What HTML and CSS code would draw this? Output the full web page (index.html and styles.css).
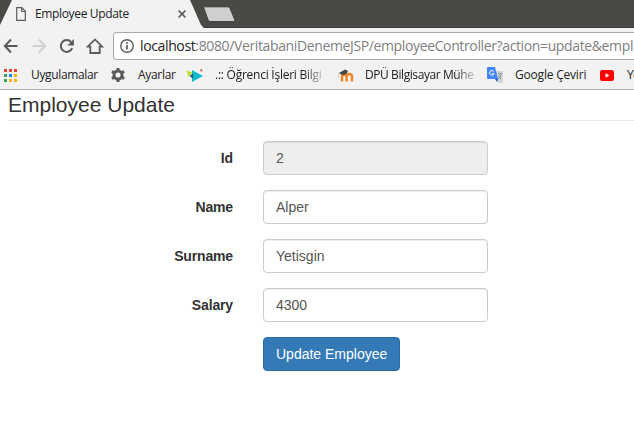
FILE: index.html
```html
<!DOCTYPE html>
<html lang="tr">
<head>
<meta charset="utf-8">
<title>Employee Update</title>
<link rel="stylesheet" href="styles.css">
</head>
<body>
<header class="browser">
  <div class="tabstrip">
    <div class="tab">
      <svg class="tab-page" width="10" height="14" viewBox="0 0 10 14"><path d="M.7.7h5.1l3.5 3.6v9H.7zM5.700.8v3.700h3.500" fill="none" stroke="#5a5a5a" stroke-width="1.2"/></svg>
      <span class="tab-title">Employee Update</span>
      <svg class="tab-close" width="8" height="8" viewBox="0 0 8 8"><path d="M.6.6l6.800 6.800M7.400.6L.6 7.400" stroke="#5a5a5a" stroke-width="1.500"/></svg>
    </div>
    <svg class="new-tab" width="33" height="17" viewBox="0 0 33 17"><path d="M1.300.8h23.600q1.400 0 2 1.300l5 12q.6 1.500-1 1.500H7.500q-1.700 0-2.400-1.500L.8 2Q.3.8 1.300.8z" fill="#cfcfcf" stroke="#3c3b39"/></svg>
  </div>
  <div class="toolbar">
    <svg class="nav-icon" width="16" height="16" viewBox="0 0 16 16"><path d="M8 1.500L1.800 8 8 14.500M2 8h12.500" fill="none" stroke="#5a5a5a" stroke-width="2"/></svg>
    <svg class="nav-icon" width="16" height="16" viewBox="0 0 16 16"><path d="M8 1.500L14.200 8 8 14.500M14 8H1.500" fill="none" stroke="#d0d0d0" stroke-width="2"/></svg>
    <svg class="nav-icon" width="16" height="16" viewBox="0 0 16 16"><path d="M13.200 10.200A5.900 5.900 0 1 1 12.200 4.100" fill="none" stroke="#5a5a5a" stroke-width="2"/><path d="M14.900 1v6.500H8.400z" fill="#5a5a5a"/></svg>
    <svg class="nav-icon" width="18" height="16" viewBox="0 0 18 16"><path d="M1.700 8.700L9 1.400l7.300 7.300h-2.600V15H4.300V8.700z" fill="none" stroke="#5a5a5a" stroke-width="1.800"/></svg>
    <div class="address">
      <svg class="info" width="14" height="14" viewBox="0 0 14 14"><circle cx="7" cy="7" r="6.200" fill="none" stroke="#5a5a5a" stroke-width="1.400"/><path d="M7 6v4.500M7 3.300v1.700" stroke="#5a5a5a" stroke-width="1.700"/></svg>
      <span class="url"><b>localhost</b><span class="path">:8080/VeritabaniDenemeJSP/employeeController?action=update&amp;empl</span></span>
    </div>
  </div>
  <nav class="bookmarks">
    <svg class="apps" width="13" height="13" viewBox="0 0 13 13" shape-rendering="crispEdges"><path d="M0 0h3v3H0zM5 0h3v3H5zM10 0h3v3h-3z" fill="#ea4335"/><path d="M5 5h3v3H5z" fill="#1a87f5"/><path d="M10 5h3v3h-3zM10 10h3v3h-3zM5 10h3v3H5z" fill="#fbb00f"/><path d="M0 5h3v3H0zM0 10h3v3H0z" fill="#34a05a"/></svg>
    <span class="label apps-label">Uygulamalar</span>
    <svg class="gear" width="14" height="14" viewBox="0 0 14 14"><circle cx="7" cy="7" r="4" fill="none" stroke="#5a5a5a" stroke-width="3"/><path d="M5.700 0h2.600l.5 2.500H5.200zM5.200 11.500h3.600L8.300 14H5.700zM.2 4.600L1.500 2.300 4 3.200 2.300 6.200zM11.700 7.800l2.100 1.600-1.300 2.300-2.500-.9zM12.500 2.300l1.300 2.300-2.100 1.600L10 3.200zM2.300 7.800L4 10.800l-2.500.9L.2 9.400z" fill="#5a5a5a"/></svg>
    <span class="label settings-label">Ayarlar</span>
    <svg class="bird" width="16" height="13" viewBox="0 0 16 13"><path d="M5 1l11 6-11 6z" fill="#13b9cc"/><path d="M0 1.500l5.500 2L1 8z" fill="#c5d92d"/><path d="M2.500 7L6 4.500v5z" fill="#205374"/><path d="M13 0l3 1-2 2z" fill="#ef5148"/></svg>
    <span class="label student-label fade">.:: Öğrenci İşleri Bilgi</span>
    <svg class="moodle" width="17" height="13" viewBox="0 0 17 13"><path d="M5 12.500V8q0-2.300 2.300-2.300T9.600 8v4.500M9.600 12.500V7.300q0-2.300 2.700-2.300T15 7.300v5.200" fill="none" stroke="#f58220" stroke-width="2.400"/><path d="M2 4l6-3.500L11 2 9.500 5 5 6z" fill="#484848"/><path d="M1.500 4v5" stroke="#e7d0c0"/></svg>
    <span class="label dpu-label fade">DPÜ Bilgisayar Mühe</span>
    <svg class="translate" width="16" height="16" viewBox="0 0 16 16"><path d="M7 4h9v12h-5z" fill="#d2d5d9"/><path d="M1 0h7l3 12H1q-1 0-1-1V1q0-1 1-1z" fill="#4285f4"/><path d="M8 12h3l-1 3z" fill="#2453b2"/><path d="M6.700 4.500A2.300 2.300 0 1 0 7 6.700H4.900" fill="none" stroke="#fff"/><path d="M11 7h4M13 6v1m1 1q-1 3-3 4m0-3l3 3" fill="none" stroke="#758c9d"/></svg>
    <span class="label translate-label">Google Çeviri</span>
    <svg class="youtube" width="14" height="11" viewBox="0 0 14 11"><rect width="14" height="11" rx="2.500" fill="#f00"/><path d="M5.500 3.200v4.600l4-2.300z" fill="#fff"/></svg>
    <span class="label youtube-label">Yo</span>
  </nav>
</header>
<main>
  <h1>Employee Update</h1>
  <form>
    <label for="id">Id</label><input id="id" value="2" readonly>
    <label for="name">Name</label><input id="name" value="Alper">
    <label for="surname">Surname</label><input id="surname" value="Yetisgin">
    <label for="salary">Salary</label><input id="salary" value="4300">
    <button type="button">Update Employee</button>
  </form>
</main>
</body>
</html>
```

FILE: styles.css
```css
* { box-sizing: border-box; }
body {
  margin: 0;
  width: 634px;
  height: 439px;
  overflow: hidden;
  background: #fff;
  color: #333;
  font: 14px/20px "Liberation Sans", Arial, sans-serif;
}
svg { display: block; flex: none; }
.browser {
  height: 90px;
  overflow: hidden;
  background: #f2f2f2;
  border-bottom: 1px solid #b0b0b0;
  color: #222;
  font-family: "Segoe UI", "Open Sans", sans-serif;
}
.tabstrip {
  display: flex;
  height: 28px;
  background: #4b4946;
  border-bottom: 1px solid #3b3a38;
}
.tab {
  display: flex;
  align-items: center;
  width: 204px;
  height: 28px;
  padding-left: 16px;
  background: #f2f2f2;
  clip-path: polygon(12px 0, 190px 0, 201px 25px, 204px 28px, 0 28px, 0 25px);
}
.tab-title { width: 142px; margin-left: 9px; font-size: 12px; letter-spacing: -.35px; white-space: nowrap; }
.tab-close { margin-left: 1px; }
.new-tab { margin: 6px 0 0 -1px; }
.toolbar { display: flex; align-items: center; height: 36px; padding-left: 3px; }
.nav-icon { margin-right: 12px; }
.nav-icon:nth-child(3) { margin-right: 11px; }
.nav-icon:nth-child(4) { margin-right: 9px; }
.address {
  display: flex;
  align-items: center;
  flex: none;
  width: 540px;
  height: 28px;
  padding-left: 6px;
  background: #fff;
  border: 1px solid #a9a9a9;
  border-radius: 3px;
}
.url { margin-left: 6px; color: #222; font-size: 14px; letter-spacing: -.37px; white-space: nowrap; }
.url b { font-weight: 400; }
.path { color: #808080; }
.bookmarks { display: flex; height: 25px; padding: 0 0 3px 4px; align-items: center; }
.label { flex: none; font-size: 12px; letter-spacing: -.35px; white-space: nowrap; }
.apps { margin-right: 14px; }
.apps-label { width: 80px; }
.gear { margin-right: 13px; }
.settings-label { width: 49px; letter-spacing: -.3px; }
.bird { margin-right: 12px; }
.student-label { width: 108px; margin-right: 14px; letter-spacing: -.25px; }
.moodle { margin-right: 11px; }
.dpu-label { width: 110px; margin-right: 12px; letter-spacing: -.42px; }
.translate { margin-right: 12px; }
.translate-label { width: 85px; letter-spacing: -.2px; }
.youtube { margin-right: 13px; }
.youtube-label { letter-spacing: -.6px; }
.fade { mask-image: linear-gradient(90deg, #000 82%, rgba(0, 0, 0, .2) 100%); }
main { padding-left: 8px; }
h1 {
  height: 31px;
  margin: 0 0 20px;
  border-bottom: 1px solid #e5e5e5;
  font-size: 21px;
  font-weight: 400;
  line-height: 30px;
}
form { display: grid; grid-template-columns: 225px 225px; column-gap: 30px; row-gap: 15px; }
label { padding-top: 7px; font-weight: 700; letter-spacing: -.15px; text-align: right; }
input, button { height: 34px; padding: 6px 12px; border-radius: 4px; font: inherit; }
input {
  width: 225px;
  color: #555;
  background: #fff;
  border: 1px solid #ccc;
  box-shadow: inset 0 1px 1px rgba(0, 0, 0, .075);
}
input[readonly] { background: #eee; }
button { grid-column: 2; justify-self: start; color: #fff; background: #337ab7; border: 1px solid #2e6da4; white-space: nowrap; }
```
